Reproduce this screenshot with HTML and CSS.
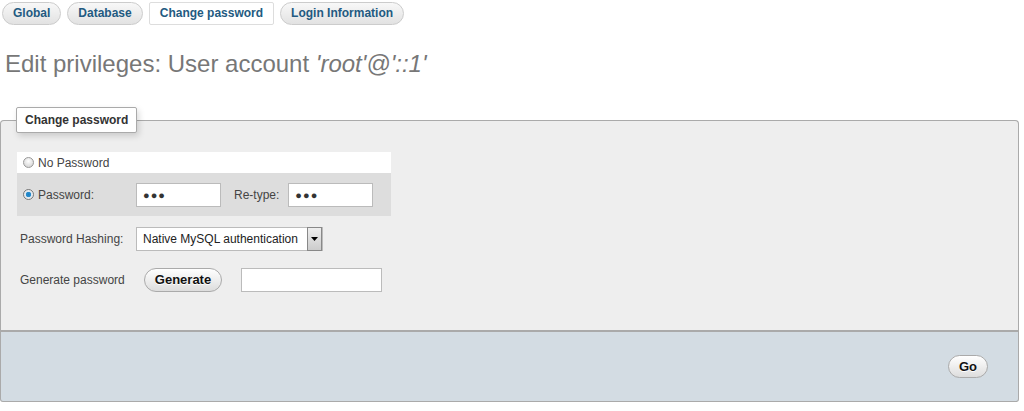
FILE: index.html
```html
<!DOCTYPE html>
<html>
<head>
<meta charset="utf-8">
<link rel="stylesheet" href="styles.css">
</head>
<body>
<nav class="tabs">
  <a class="tab">Global</a>
  <a class="tab">Database</a>
  <a class="tab active">Change password</a>
  <a class="tab">Login Information</a>
</nav>
<h2 class="title">Edit privileges: User account <i>'root'@'::1'</i></h2>
<form class="form">
  <fieldset class="panel">
    <legend class="legend">Change password</legend>
    <div class="pw-table">
      <div class="row row-white">
        <label class="radio-label"><span class="radio"></span>No Password</label>
      </div>
      <div class="row row-grey">
        <label class="radio-label lbl-pw"><span class="radio checked"></span>Password:</label>
        <span class="input pw">&#9679;&#9679;&#9679;</span>
        <span class="retype">Re-type:</span>
        <span class="input pw">&#9679;&#9679;&#9679;</span>
      </div>
    </div>
    <div class="line hashing">
      <span class="lbl">Password Hashing:</span>
      <span class="select"><span class="select-text">Native MySQL authentication</span><span class="select-arrow"><svg width="7" height="4" viewBox="0 0 7 4"><path d="M0 0H7L3.5 4Z" fill="#000"/></svg></span></span>
    </div>
    <div class="line generate">
      <span class="lbl">Generate password</span>
      <span class="btn gen">Generate</span>
      <span class="input empty"></span>
    </div>
  </fieldset>
  <div class="footer">
    <span class="btn go">Go</span>
  </div>
</form>
</body>
</html>
```
FILE: styles.css
```css
* { box-sizing: border-box; }
body {
  margin: 0;
  font-family: "Liberation Sans", Arial, sans-serif;
  font-size: 12px;
  color: #444;
  background: #fff;
}
.tabs {
  display: flex;
  gap: 6px;
  padding: 2px 0 0 2px;
}
.tab {
  display: block;
  height: 23px;
  padding: 0 10px;
  line-height: 21px;
  font-size: 12px;
  font-weight: bold;
  color: #235a81;
  border: 1px solid #ccc;
  border-radius: 12px;
  background: linear-gradient(#f8f8f8, #e2e2e2);
}
.tab.active {
  background: #fff;
  border-radius: 2px;
  border-color: #ddd;
}
.title {
  margin: 24px 0 0 5px;
  font-size: 24px;
  font-weight: normal;
  color: #777;
  line-height: 30px;
  height: 30px;
}
.form {
  margin: 28px 0 0 0;
  width: 1019px;
}
.panel {
  margin: 0;
  padding: 0 0 38px 16px;
  border: 1px solid #aaa;
  border-bottom: none;
  border-radius: 4px 4px 0 0;
  background: #eee;
  min-width: 0;
}
.legend {
  padding: 5px 8px;
  margin-left: -1px;
  font-weight: bold;
  font-size: 12px;
  color: #333;
  background: #fff;
  border: 1px solid #aaa;
  border-radius: 2px;
  box-shadow: 2px 3px 6px rgba(0,0,0,0.15);
  line-height: 14px;
}
.pw-table {
  width: 374px;
  margin-top: 19px;
}
.row {
  display: flex;
  align-items: center;
}
.row-white {
  background: #fff;
  height: 21px;
  padding-left: 6px;
}
.row-grey {
  background: #ddd;
  height: 43px;
  padding-left: 6px;
}
.radio-label {
  display: flex;
  align-items: center;
  color: #444;
}
.lbl-pw { width: 113px; }
.radio {
  width: 11px;
  height: 11px;
  border-radius: 50%;
  border: 1px solid #999;
  background: radial-gradient(circle at 50% 35%, #fff, #ccc);
  margin-right: 4px;
}
.radio.checked {
  background: radial-gradient(circle, #1a7fc0 0, #2c8fd0 2.5px, #dfe7ee 3px, #f4f4f4 100%);
  border-color: #777;
}
.input {
  display: block;
  background: #fff;
  border: 1px solid #bbb;
  height: 24px;
  line-height: 22px;
  padding-left: 6px;
  font-size: 11px;
  letter-spacing: 1px;
  color: #333;
}
.pw { width: 85px; }
.retype {
  margin: 0 9px 0 13px;
  color: #444;
}
.line {
  display: flex;
  align-items: center;
  padding-left: 3px;
}
.lbl { width: 116px; color: #444; }
.hashing { margin-top: 11px; height: 24px; }
.generate { margin-top: 17px; height: 24px; }
.select {
  display: flex;
  height: 24px;
  border: 1px solid #bbb;
  background: #fff;
}
.select-text {
  padding: 0 4px 0 6px;
  line-height: 22px;
  font-size: 12px;
  color: #222;
  width: 170px;
}
.select-arrow {
  width: 15px;
  background: linear-gradient(#eee, #ccc);
  display: flex;
  align-items: center;
  justify-content: center;
  border: 1px solid #888;
  margin-top: -1px;
  height: 24px;
}
.btn {
  display: block;
  height: 24px;
  line-height: 22px;
  font-weight: bold;
  font-size: 13px;
  color: #111;
  border: 1px solid #aaa;
  border-radius: 12px;
  background: linear-gradient(#fff, #ddd);
  text-align: center;
  text-shadow: 0 1px 0 #fff;
}
.gen { width: 78px; margin-left: 8px; }
.empty { width: 141px; margin-left: 19px; }
.footer {
  display: flex;
  justify-content: flex-end;
  align-items: center;
  height: 72px;
  padding-right: 30px;
  background: #d3dce3;
  border: 1px solid #aaa;
  border-top: 2px solid #aaa;
  border-radius: 0 0 3px 3px;
}
.go { width: 40px; height: 23px; line-height: 21px; }
```
